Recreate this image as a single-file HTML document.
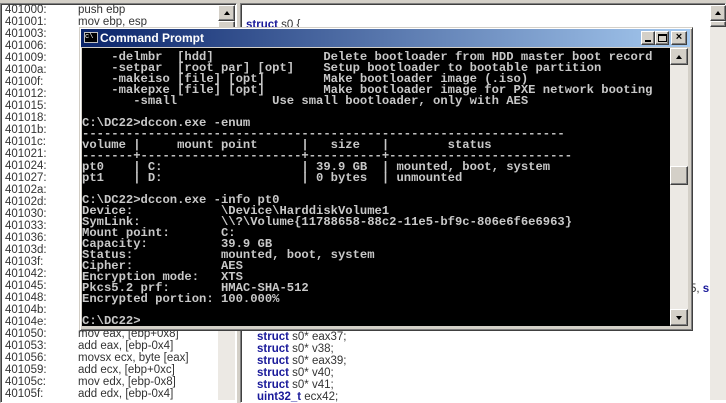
<!DOCTYPE html>
<html><head><meta charset="utf-8"><style>
*{margin:0;padding:0;box-sizing:border-box}
body{width:726px;height:400px;overflow:hidden;background:#d4d0c8;position:relative;font-family:"Liberation Sans",sans-serif}
.pan{position:absolute;background:#fff;border:1px solid #808080;border-right-color:#fff;border-bottom-color:#fff;box-shadow:inset 1px 1px 0 #404040}
.sb{position:absolute;background:#ece9e4;}
.btn{position:absolute;background:#d4d0c8;border:1px solid;border-color:#fff #404040 #404040 #fff;box-shadow:inset -1px -1px 0 #808080}
.l{position:absolute;font-size:11.5px;color:#333;white-space:pre;line-height:12px}
.k{color:#1a1a9a;font-weight:bold}
.con{position:absolute;left:82px;top:48px;width:588px;height:278px;background:#000;color:#c8c8c8;font-family:"Liberation Mono",monospace;font-weight:bold;font-size:12.2px;line-height:11px;white-space:pre;padding-top:4px;overflow:hidden}
.tri{width:0;height:0;border-left:3px solid transparent;border-right:3px solid transparent;position:absolute;left:50%;margin-left:-3px}
</style></head><body>
<div class="pan" style="left:0;top:3px;width:237px;height:400px"></div>
<div class="sb" style="left:218px;top:5px;width:17px;height:395px"></div>
<div class="btn" style="left:218px;top:5px;width:17px;height:16px"><div class="tri" style="top:5px;border-bottom:4px solid #000"></div></div>
<div class="btn" style="left:218px;top:21px;width:17px;height:8px"></div>
<div class="pan" style="left:240px;top:3px;width:486px;height:400px"></div>
<div class="sb" style="left:710px;top:5px;width:16px;height:395px"></div>
<div class="btn" style="left:710px;top:5px;width:16px;height:16px"><div class="tri" style="top:5px;border-bottom:4px solid #000"></div></div>
<div class="btn" style="left:710px;top:21px;width:16px;height:6px"></div>

<div class="l" style="left:5px;top:4px">401000:
401001:
401003:
401006:
401009:
40100a:
40100f:
401012:
401015:
401018:
40101b:
40101c:
401021:
401024:
401027:
40102a:
40102d:
401030:
401033:
401036:
40103d:
40103f:
401042:
401045:
401048:
40104b:
40104e:
401050:
401053:
401056:
401059:
40105c:
40105f:</div>
<div class="l" style="left:78px;top:4px">push ebp
mov ebp, esp</div>
<div class="l" style="left:78px;top:328px">mov eax, [ebp+0x8]
add eax, [ebp-0x4]
movsx ecx, byte [eax]
add ecx, [ebp+0xc]
mov edx, [ebp-0x8]
add edx, [ebp-0x4]</div>
<div class="l" style="left:246px;top:19px"><span class="k">struct</span> s0 {</div>
<div class="l" style="left:690px;top:283px">5, <span class="k">s</span></div>
<div class="l" style="left:257px;top:331px"><span class="k">struct</span> s0* eax37;
<span class="k">struct</span> s0* v38;
<span class="k">struct</span> s0* eax39;
<span class="k">struct</span> s0* v40;
<span class="k">struct</span> s0* v41;
<span class="k">uint32_t</span> ecx42;</div>

<div style="position:absolute;left:79px;top:27px;width:614px;height:304px;background:#d4d0c8;border:1px solid;border-color:#d4d0c8 #404040 #404040 #d4d0c8;box-shadow:inset 1px 1px 0 #fff,inset -1px -1px 0 #808080"></div>
<div style="position:absolute;left:81px;top:29px;width:609px;height:18px;background:linear-gradient(90deg,#0a246a,#a6caf0)"></div>
<div style="position:absolute;left:84px;top:32px;width:14px;height:11px;background:#000;border:1px solid #c0c0c0;color:#fff;font-size:7px;line-height:9px;font-family:'Liberation Mono',monospace">c\</div>
<div style="position:absolute;left:100px;top:29px;color:#fff;font-weight:bold;font-size:12px;line-height:18px">Command Prompt</div>
<div class="btn" style="left:641px;top:31px;width:14px;height:14px"><div style="position:absolute;left:3px;top:8px;width:6px;height:2px;background:#000"></div></div>
<div class="btn" style="left:655px;top:31px;width:14px;height:14px"><div style="position:absolute;left:2px;top:2px;width:9px;height:8px;border:1px solid #000;border-top-width:2px"></div></div>
<div class="btn" style="left:671px;top:31px;width:16px;height:14px;font-size:11px;line-height:11px;text-align:center;font-weight:bold">×</div>
<div class="con">    -delmbr  [hdd]               Delete bootloader from HDD master boot record
    -setpar  [root par] [opt]    Setup bootloader to bootable partition
    -makeiso [file] [opt]        Make bootloader image (.iso)
    -makepxe [file] [opt]        Make bootloader image for PXE network booting
       -small             Use small bootloader, only with AES

C:\DC22>dccon.exe -enum
------------------------------------------------------------------
volume |     mount point      |   size   |        status
-------+----------------------+----------+-------------------------
pt0    | C:                   | 39.9 GB  | mounted, boot, system
pt1    | D:                   | 0 bytes  | unmounted

C:\DC22>dccon.exe -info pt0
Device:            \Device\HarddiskVolume1
SymLink:           \\?\Volume{11788658-88c2-11e5-bf9c-806e6f6e6963}
Mount point:       C:
Capacity:          39.9 GB
Status:            mounted, boot, system
Cipher:            AES
Encryption mode:   XTS
Pkcs5.2 prf:       HMAC-SHA-512
Encrypted portion: 100.000%

C:\DC22></div>
<div class="sb" style="left:670px;top:48px;width:18px;height:278px;background:#ece9e4"></div>
<div class="btn" style="left:670px;top:48px;width:18px;height:17px"><div class="tri" style="top:6px;border-bottom:4px solid #000"></div></div>
<div class="btn" style="left:670px;top:166px;width:18px;height:19px"></div>
<div class="btn" style="left:670px;top:309px;width:18px;height:17px"><div class="tri" style="top:6px;border-top:4px solid #000"></div></div>
</body></html>
